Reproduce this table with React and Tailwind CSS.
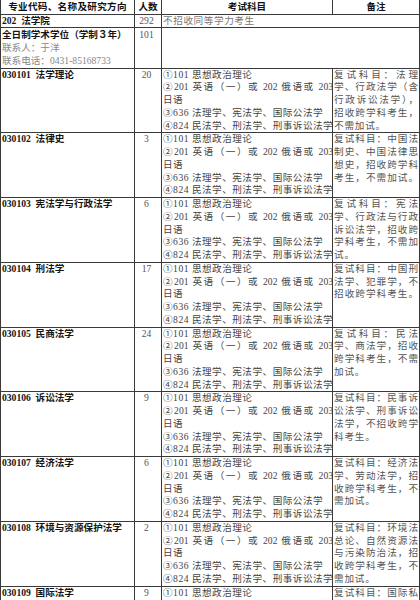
import React from "react";

const exams = [
  "①101 思想政治理论",
  "②201 英语（一）或 202 俄语或 203",
  "日语",
  "③636 法理学、宪法学、国际公法学",
  "④824 民法学、刑法学、刑事诉讼法学",
];

const majors = [
  {
    code: "030101",
    name: "法学理论",
    num: 20,
    note: ["复试科目：法理", "学、行政法学（含", "行政诉讼法学），", "招收跨学科考生，", "不需加试。"],
  },
  {
    code: "030102",
    name: "法律史",
    num: 3,
    note: ["复试科目：中国法", "制史、中国法律思", "想史，招收跨学科", "考生，不需加试。"],
  },
  {
    code: "030103",
    name: "宪法学与行政法学",
    num: 6,
    note: ["复试科目：宪法", "学、行政法与行政", "诉讼法学，招收跨", "学科考生，不需加", "试。"],
  },
  {
    code: "030104",
    name: "刑法学",
    num: 17,
    note: ["复试科目：中国刑", "法学、犯罪学，不", "招收跨学科考生。"],
  },
  {
    code: "030105",
    name: "民商法学",
    num: 24,
    note: ["复试科目：民法", "学、商法学，招收", "跨学科考生，不需", "加试。"],
  },
  {
    code: "030106",
    name: "诉讼法学",
    num: 9,
    note: ["复试科目：民事诉", "讼法学、刑事诉讼", "法学，不招收跨学", "科考生。"],
  },
  {
    code: "030107",
    name: "经济法学",
    num: 6,
    note: ["复试科目：经济法", "学、劳动法学，招", "收跨学科考生，不", "需加试。"],
  },
  {
    code: "030108",
    name: "环境与资源保护法学",
    num: 2,
    note: ["复试科目：环境法", "总论、自然资源法", "与污染防治法，招", "收跨学科考生，不", "需加试。"],
  },
  {
    code: "030109",
    name: "国际法学",
    num: 9,
    note: ["复试科目：国际私", "法学、国际经济法", "学，招收跨学科考", "生，不需加试。"],
  },
];

const font = {
  fontFamily: '"Liberation Serif", "Noto Sans CJK SC", serif',
};

const MajorRow = ({ m }) => (
  <div className="grid grid-cols-[134px_27px_171px_87px] border-b border-[#3a3a3a] leading-[12.75px]">
    <div className="border-r border-[#3a3a3a] h-[63.75px] pl-[1px] font-bold text-[#151515]">
      {m.code}&nbsp; {m.name}
    </div>
    <div className="border-r border-[#3a3a3a] text-center pr-[3px] text-[#555]">{m.num}</div>
    <div className="border-r border-[#3a3a3a] pl-[1px] text-[#444] whitespace-nowrap tracking-[0.5px]">
      {exams.map((line, i) => (
        <div
          key={i}
          className={i === 1 ? "text-justify [text-align-last:justify] tracking-[0px] mr-[-1px]" : ""}
        >
          {line}
        </div>
      ))}
    </div>
    <div className="border-r border-[#3a3a3a] pl-[1px] pr-[1px] text-[#555] whitespace-nowrap">
      {m.note.map((line, i) => (
        <div
          key={i}
          className={
            i < m.note.length - 1 || line.length >= 8
              ? "text-justify [text-align-last:justify]"
              : "tracking-[0.8px]"
          }
        >
          {line}
        </div>
      ))}
    </div>
  </div>
);

export default function App() {
  return (
    <div className="w-[420px] h-[600px] overflow-hidden bg-white text-[9.6px]" style={font}>
      <div className="border-l border-[#3a3a3a] w-[420px]">
        <div className="grid grid-cols-[134px_27px_171px_87px] border-b border-[#3a3a3a] leading-[13.5px] font-bold text-[#111]">
          <div className="border-r border-[#3a3a3a] text-center tracking-[0.3px]">专业代码、名称及研究方向</div>
          <div className="border-r border-[#3a3a3a] text-center">人数</div>
          <div className="border-r border-[#3a3a3a] text-center">考试科目</div>
          <div className="border-r border-[#3a3a3a] text-center">备注</div>
        </div>

        <div className="grid grid-cols-[134px_27px_171px_87px] border-b border-[#3a3a3a] leading-[12.5px]">
          <div className="border-r border-[#3a3a3a] pl-[1px] font-bold text-[#151515]">202&nbsp; 法学院</div>
          <div className="border-r border-[#3a3a3a] text-center pr-[3px] text-[#555]">292</div>
          <div className="col-span-2 border-r border-[#3a3a3a] pl-[1px] text-[#777] tracking-[0.6px]">不招收同等学力考生</div>
        </div>

        <div className="grid grid-cols-[134px_27px_171px_87px] border-b border-[#3a3a3a] leading-[13.17px] h-[40.5px]">
          <div className="border-r border-[#3a3a3a] pl-[1px]">
            <div className="font-bold text-[#151515]">全日制学术学位（学制３年）</div>
            <div className="text-[#888]">联系人：于洋</div>
            <div className="text-[#888]">联系电话：0431-85168733</div>
          </div>
          <div className="border-r border-[#3a3a3a] text-center pr-[3px] text-[#555]">101</div>
          <div className="col-span-2 border-r border-[#3a3a3a]"></div>
        </div>

        {majors.map((m) => (
          <MajorRow key={m.code} m={m} />
        ))}
      </div>
    </div>
  );
}
